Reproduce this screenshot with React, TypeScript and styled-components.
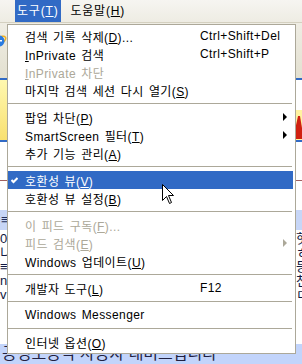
import React from "react";
import styled, { createGlobalStyle } from "styled-components";

const GlobalStyle = createGlobalStyle`
  html, body {
    margin: 0;
    padding: 0;
  }
  body {
    width: 302px;
    height: 364px;
    overflow: hidden;
    background: #fff;
    font-family: "Liberation Sans", "Noto Sans CJK KR", sans-serif;
    font-size: 12px;
  }
`;

const Screen = styled.div`
  position: relative;
  width: 302px;
  height: 364px;
  overflow: hidden;
  background: #fff;
  display: flex;
  flex-direction: column;
`;

/* ---------- window behind the menu ---------- */

const MenuBar = styled.div`
  display: flex;
  gap: 7px;
  height: 23px;
  padding-left: 15px;
  box-sizing: border-box;
  background: linear-gradient(#f6f5f1, #eeece3);
  border-bottom: 1px solid #d4d0c0;
  letter-spacing: 0.8px;
`;

const MenuTitle = styled.div<{ $active?: boolean }>`
  height: 22px;
  line-height: 23px;
  padding: 0 3px 0 2px;
  color: ${(p) => (p.$active ? "#fff" : "#000")};
  background: ${(p) => (p.$active ? "#316ac5" : "transparent")};
  white-space: nowrap;
`;

const Toolbar = styled.div`
  height: 57px;
  padding-top: 10px;
  box-sizing: border-box;
  display: flex;
  justify-content: space-between;
  background: linear-gradient(#efede4, #e3e0d0);
  border-bottom: 2px solid #316ac5;
`;

const Logo = styled.svg`
  margin-left: -9px;
`;

const InfoRow = styled.div`
  height: 60px;
  display: flex;
  border-bottom: 2px solid #316ac5;
`;

const GoldStrip = styled.div`
  width: 40px;
  background: linear-gradient(#fff8b0, #f8e070);
`;

const InfoFill = styled.div`
  flex: 1;
`;

const InfoIcon = styled.div`
  width: 20px;
  display: flex;
  align-items: flex-end;
  justify-content: flex-end;
`;

const Plain = styled.div`
  height: 69px;
  box-sizing: border-box;
  padding-top: 38px;
`;

const Rule = styled.div`
  height: 1px;
  background: #a06060;
`;

const BlueBand = styled.div`
  height: 20px;
  display: flex;
  justify-content: space-between;
  background: #c7d6f7;
  color: #203060;
  font-size: 13px;
  line-height: 20px;
  padding-left: 1px;
`;

const TextRow = styled.div`
  height: 114px;
  display: flex;
  justify-content: space-between;
  color: #101840;
  font-size: 13px;
  line-height: 14px;
`;

const EdgeColumn = styled.div<{ $right?: boolean }>`
  width: 12px;
  padding-top: 2px;
  display: flex;
  flex-direction: column;
  align-items: ${(p) => (p.$right ? "flex-end" : "flex-start")};
  margin-right: ${(p) => (p.$right ? "-6px" : "0")};
`;

const BottomBand = styled.div`
  flex: 1;
  background: #c2d4fb;
  color: #202040;
  font-size: 16px;
  line-height: 20px;
  padding-left: 2px;
  white-space: nowrap;
`;

/* ---------- drop-down menu ---------- */

const DropMenu = styled.div`
  position: absolute;
  top: 24px;
  left: 7px;
  width: 289px;
  box-sizing: border-box;
  border: 1px solid #aca899;
  background: #fff;
  padding: 2px 2px 2px 0;
  letter-spacing: 0.4px;
  word-spacing: 1.5px;
`;

const Item = styled.div<{ $hot?: boolean; $off?: boolean }>`
  display: grid;
  grid-template-columns: 17px 175px 1fr 12px;
  align-items: center;
  height: 18px;
  white-space: nowrap;
  color: ${(p) => (p.$hot ? "#fff" : p.$off ? "#aca899" : "#000")};
  background: ${(p) => (p.$hot ? "#316ac5" : "transparent")};
`;

const Check = styled.svg`
  display: block;
  margin-left: 3px;
`;

const Shortcut = styled.span``;

const Arrow = styled.span<{ $off?: boolean }>`
  width: 0;
  height: 0;
  margin-left: 2px;
  border-left: 4px solid ${(p) => (p.$off ? "#aca899" : "#000")};
  border-top: 4px solid transparent;
  border-bottom: 4px solid transparent;
`;

const Separator = styled.div`
  height: 9px;
  display: flex;
  align-items: center;
  padding-right: 1px;

  &::after {
    content: "";
    flex: 1;
    height: 1px;
    background: #aca899;
  }
`;

const Cursor = styled.svg`
  position: absolute;
  left: 162px;
  top: 184px;
`;

type Entry =
  | { sep: true }
  | {
      sep?: false;
      label: React.ReactNode;
      key?: string;
      off?: boolean;
      hot?: boolean;
      checked?: boolean;
      sub?: boolean;
    };

const entries: Entry[] = [
  { label: <>검색 기록 삭제(<u>D</u>)...</>, key: "Ctrl+Shift+Del" },
  { label: <><u>I</u>nPrivate 검색</>, key: "Ctrl+Shift+P" },
  { label: <><u>I</u>nPrivate 차단</>, off: true },
  { label: <>마지막 검색 세션 다시 열기(<u>S</u>)</> },
  { sep: true },
  { label: <>팝업 차단(<u>P</u>)</>, sub: true },
  { label: <>SmartScreen 필터(<u>T</u>)</>, sub: true },
  { label: <>추가 기능 관리(<u>A</u>)</> },
  { sep: true },
  { label: <>호환성 뷰(<u>V</u>)</>, hot: true, checked: true },
  { label: <>호환성 뷰 설정(<u>B</u>)</> },
  { sep: true },
  { label: <>이 피드 구독(<u>F</u>)...</>, off: true },
  { label: <>피드 검색(<u>E</u>)</>, off: true, sub: true },
  { label: <>Windows 업데이트(<u>U</u>)</> },
  { sep: true },
  { label: <>개발자 도구(<u>L</u>)</>, key: "F12" },
  { sep: true },
  { label: <>Windows Messenger</> },
  { sep: true },
  { label: <>인터넷 옵션(<u>O</u>)</> },
];

const leftChars = ["0", "니", "≡", "n", "v"];
const rightChars = ["헛", "ㅎ", "등", "천", "ㅁ"];

const App = () => {
  return (
    <>
      <GlobalStyle />
      <Screen>
        <MenuBar>
          <MenuTitle $active>
            도구(<u>T</u>)
          </MenuTitle>
          <MenuTitle>
            도움말(<u>H</u>)
          </MenuTitle>
        </MenuBar>
        <Toolbar>
          <Logo width="16" height="16" viewBox="0 0 16 16">
            <ellipse cx="8" cy="8" rx="7.5" ry="3.5" fill="none" stroke="#f0b020" strokeWidth="1.5" transform="rotate(-30 8 8)" />
            <circle cx="8" cy="8" r="5.5" fill="#2a7be0" />
            <rect x="5" y="7" width="6" height="1.5" fill="#fff" />
          </Logo>
        </Toolbar>
        <InfoRow>
          <GoldStrip />
          <InfoFill />
          <InfoIcon>
            <svg width="10" height="30" viewBox="0 0 10 30">
              <rect x="0" y="0" width="10" height="30" fill="#fff3a0" />
              <path d="M1 29 L6 6 L8 6 L10 18 L10 29 Z" fill="#d02010" />
            </svg>
          </InfoIcon>
        </InfoRow>
        <Plain>
          <Rule />
        </Plain>
        <BlueBand>
          <span>≡</span>
          <span />
        </BlueBand>
        <TextRow>
          <EdgeColumn>
            {leftChars.map((c, i) => (
              <span key={i}>{c}</span>
            ))}
          </EdgeColumn>
          <EdgeColumn $right>
            {rightChars.map((c, i) => (
              <span key={i}>{c}</span>
            ))}
          </EdgeColumn>
        </TextRow>
        <BottomBand>공정보공약 사용자 대비드립니다</BottomBand>

        <DropMenu>
          {entries.map((e, i) =>
            e.sep ? (
              <Separator key={i} />
            ) : (
              <Item key={i} $hot={e.hot} $off={e.off}>
                <span>
                  {e.checked && (
                    <Check width="7" height="7" viewBox="0 0 7 7">
                      <polyline points="0.5,3 2.5,5 6.5,1" fill="none" stroke="#fff" strokeWidth="2" />
                    </Check>
                  )}
                </span>
                <span>{e.label}</span>
                <Shortcut>{e.key}</Shortcut>
                {e.sub ? <Arrow $off={e.off} /> : <span />}
              </Item>
            )
          )}
        </DropMenu>

        <Cursor width="13" height="21" viewBox="0 0 13 21">
          <polygon
            points="0.5,0.5 0.5,16.5 4.5,12.5 7.5,19.5 9.5,18.5 6.5,11.5 11.5,11.5"
            fill="#fff"
            stroke="#000"
            strokeWidth="1"
          />
        </Cursor>
      </Screen>
    </>
  );
};

export default App;
